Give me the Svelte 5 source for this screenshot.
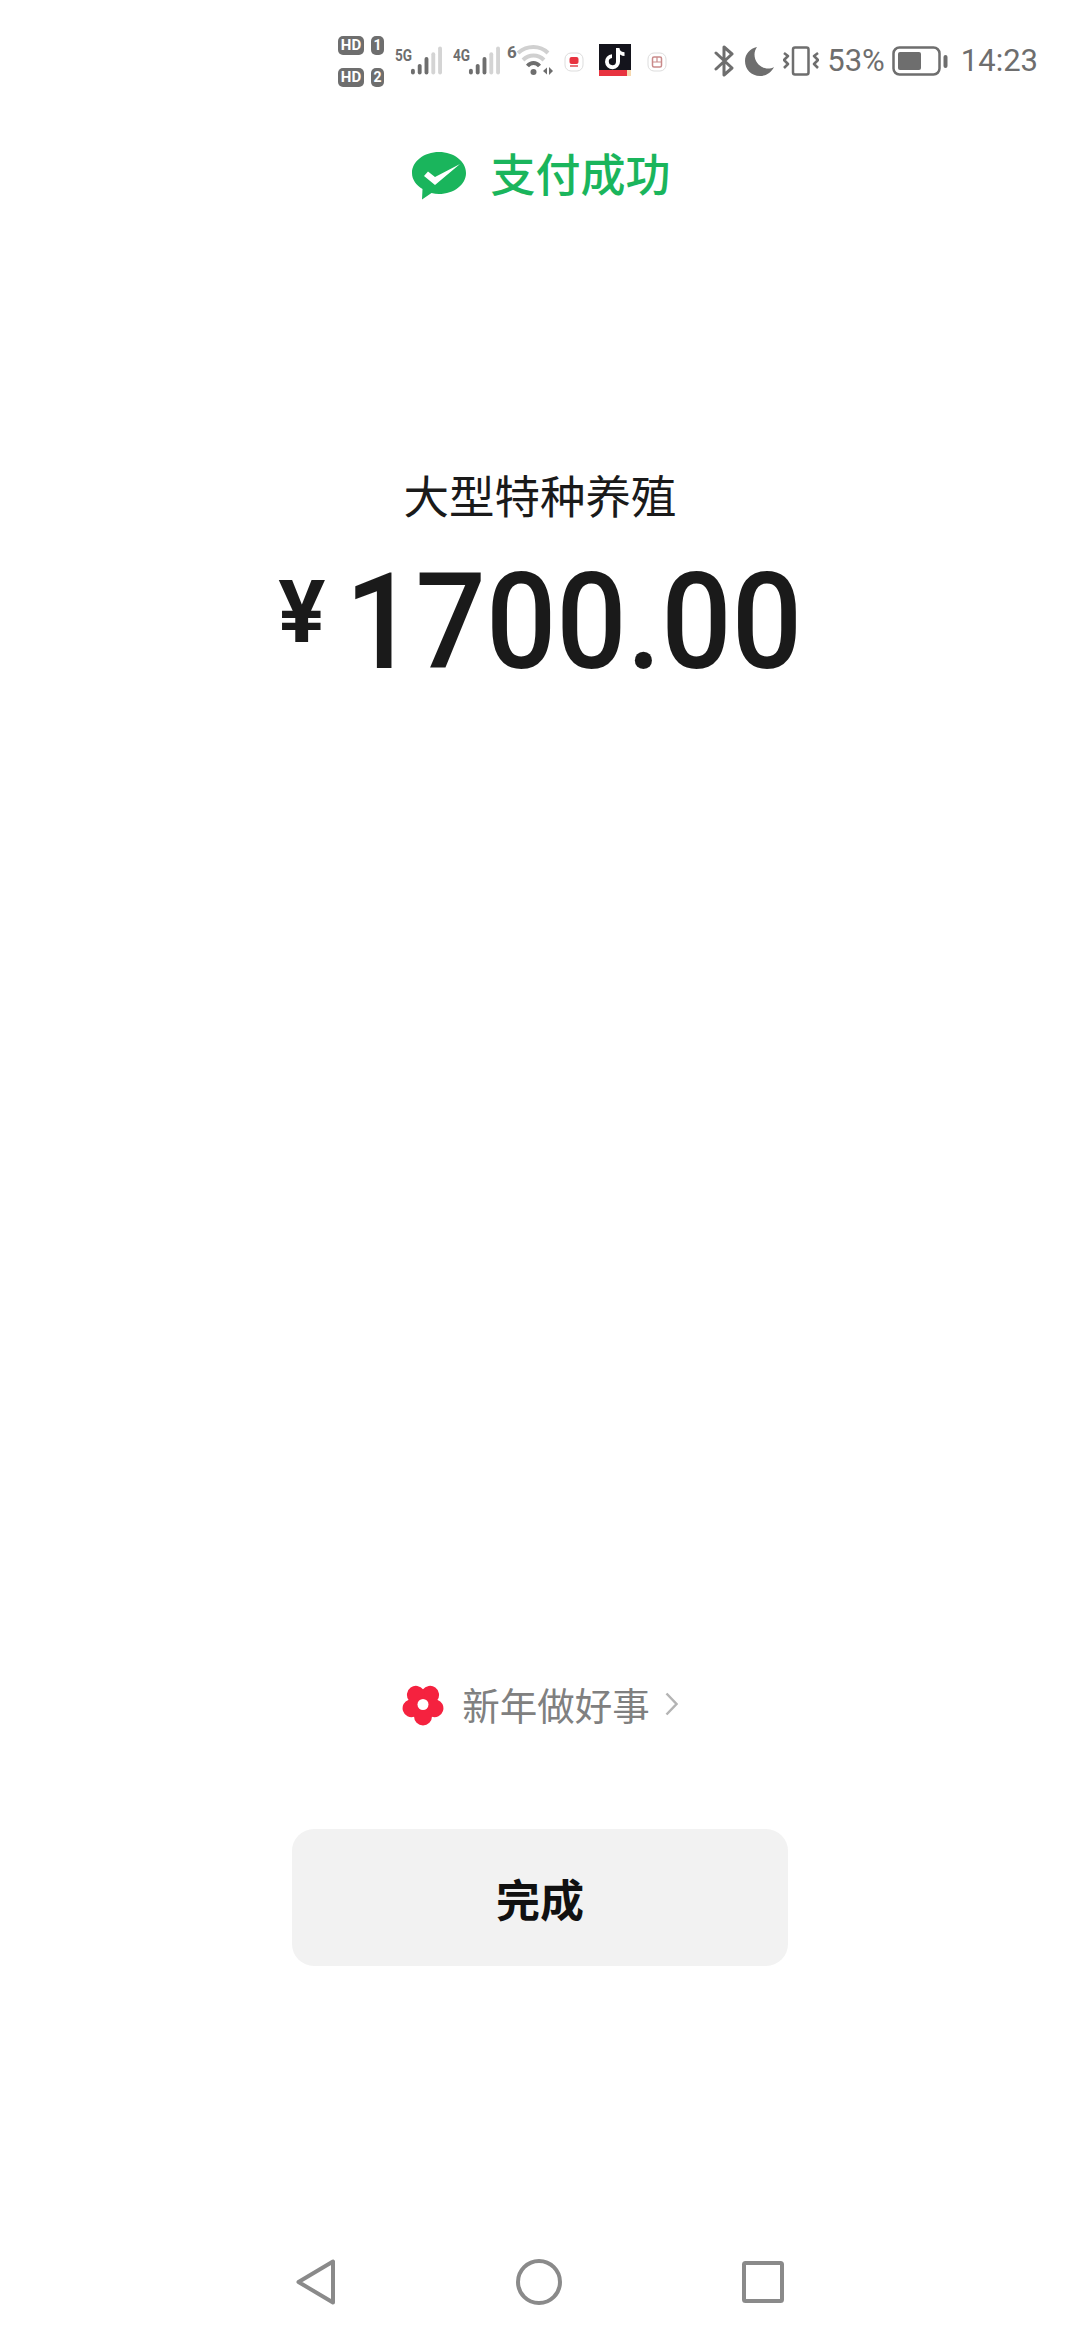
<script>
	const sims = [{ label: '5G' }, { label: '4G' }];
	const bars = [
		{ x: 0, h: 6, on: true },
		{ x: 7, h: 11, on: true },
		{ x: 14, h: 18, on: true },
		{ x: 21, h: 23, on: false },
		{ x: 28, h: 29, on: false }
	];
</script>

<div class="page">
	<header class="status">
		<div class="left">
			<div class="hd">
				<div class="hd-row"><span class="hd-tag">HD</span><span class="hd-num">1</span></div>
				<div class="hd-row"><span class="hd-tag">HD</span><span class="hd-num">2</span></div>
			</div>
			{#each sims as sim}
				<div class="sim">
					<span class="sim-label">{sim.label}</span>
					<svg width="33" height="30" viewBox="0 0 33 30">
						{#each bars as b}
							<rect x={b.x + 1} y={30 - b.h} width="4" height={b.h} rx="2" fill={b.on ? '#6e6e6e' : '#d4d4d4'} />
						{/each}
					</svg>
				</div>
			{/each}
			<div class="wifi">
				<span class="wifi-num">6</span>
				<svg width="36" height="32" viewBox="0 0 36 32" fill="none">
					<path d="M1 9 C10 1 23 1 31 9" stroke="#d0d0d0" stroke-width="4" />
					<path d="M6 16 C12 10 21 10 27 16" stroke="#d0d0d0" stroke-width="4" />
					<path d="M10.500 22 C14 18 19 18 22.500 22" stroke="#6e6e6e" stroke-width="4" />
					<circle cx="16.500" cy="28" r="3" fill="#6e6e6e" />
					<path d="M26 27 L30 23.500 V30.500Z M32 23 L36 27 L32 31Z" fill="#6e6e6e" />
				</svg>
			</div>
			<svg class="app-a" width="20" height="20" viewBox="0 0 20 20">
				<rect x="1" y="1" width="18" height="18" rx="6" fill="#fff" stroke="#ddd" />
				<rect x="5.500" y="5" width="9" height="7" rx="2" fill="#e8333f" />
				<rect x="6" y="13" width="8" height="2" fill="#e8767d" />
			</svg>
			<svg class="app-tt" width="32" height="32" viewBox="0 0 32 32">
				<rect width="32" height="32" fill="#14141c" />
				<path d="M17 4 V17.500 A3.600 3.600 0 1 1 13 14 V10.200 A7.500 7.500 0 1 0 21 17.500 V10.500 C22.500 11.500 24 12 25.500 12 V8.200 C21.500 8 20.800 6 20.500 4Z" fill="#fff" />
				<rect y="26" width="28" height="6" fill="#e8333f" />
				<rect x="28" y="26" width="4" height="6" fill="#f6d9b0" />
			</svg>
			<svg class="app-b" width="20" height="20" viewBox="0 0 20 20" fill="none">
				<rect x="1" y="1" width="18" height="18" rx="6" fill="#fff" stroke="#ddd" />
				<rect x="5.500" y="5" width="9" height="10" rx="1.500" stroke="#c98a8a" stroke-width="1.500" />
				<path d="M5.500 10 H14.500 M10 5 V10" stroke="#c98a8a" stroke-width="1.200" />
			</svg>
		</div>
		<div class="right">
			<svg width="21" height="32" viewBox="0 0 21 32" fill="none" stroke="#6e6e6e" stroke-width="3" stroke-linejoin="round" stroke-linecap="round">
				<path d="M2 8 L18 23 L10 30 V2 L18 9 L2 24" />
			</svg>
			<svg class="moon" width="29" height="30" viewBox="0 0 29 30">
				<path d="M12 1 C5 2.500 0 8 0 15 C0 23.500 6.500 30 15 30 C21 30 26.500 26.500 29 21 C27.500 22 25 22.500 23 22.500 C15.500 22.500 9.500 16 9.500 8.500 C9.500 6 10.500 3 12 1Z" fill="#6e6e6e" />
			</svg>
			<svg class="vibrate" width="36" height="30" viewBox="0 0 36 30" fill="none" stroke="#6e6e6e" stroke-width="2.500" stroke-linejoin="round">
				<rect x="10" y="1.500" width="15.500" height="27" rx="2" />
				<path d="M1 7 L5 10 L1 14 L5 18 L1 22" />
				<path d="M35 7 L31 10 L35 14 L31 18 L35 22" />
			</svg>
			<span class="pct">53%</span>
			<svg class="battery" width="56" height="30" viewBox="0 0 56 30" fill="none">
				<rect x="1.500" y="1.500" width="46" height="27" rx="6" stroke="#6e6e6e" stroke-width="2.500" />
				<rect x="6" y="6" width="23" height="18" rx="2" fill="#6e6e6e" />
				<rect x="51.500" y="9" width="4" height="13" rx="2" fill="#6e6e6e" />
			</svg>
			<span class="time">14:23</span>
		</div>
	</header>

	<main class="main">
		<div class="result">
			<svg width="54" height="48" viewBox="0 0 54 48">
				<path d="M27 0 C42 0 54 9.500 54 21 C54 32.500 42 42 27 42 C24.500 42 22 41.700 19.500 41 L10 47.500 L10.500 37 C4 33 0 27.500 0 21 C0 9.500 12 0 27 0Z" fill="#1ab55c" />
				<path d="M12 24 L16 19.500 L23 25 L48 12 L23 33Z" fill="#fff" />
			</svg>
			<span class="result-text">支付成功</span>
		</div>

		<div class="payee">大型特种养殖</div>
		<div class="amount">
			<span class="currency">¥</span>
			<span class="value">1700.00</span>
		</div>

		<div class="spacer"></div>

		<div class="promo">
			<svg width="42" height="43" viewBox="0 0 42 43">
				<g fill="#f5223f">
					<circle cx="21" cy="21.500" r="11" />
					{#each [0, 72, 144, 216, 288] as a}
						<circle cx="21" cy="9.500" r="9" transform="rotate({a + 36} 21 21.500)" />
					{/each}
				</g>
				<circle cx="21" cy="21.500" r="5.500" fill="#fff" />
			</svg>
			<span class="promo-text">新年做好事</span>
			<svg class="chevron" width="13" height="24" viewBox="0 0 13 24" fill="none">
				<path d="M1.500 1.500 L11.500 12 L1.500 22.500" stroke="#b4b4b4" stroke-width="2.500" />
			</svg>
		</div>

		<button class="done">完成</button>
	</main>

	<nav class="nav">
		<svg width="40" height="46" viewBox="0 0 40 46" fill="none" stroke="#8a8a8a" stroke-width="4" stroke-linejoin="round">
			<path d="M37 2.500 V43.500 L2.500 23Z" />
		</svg>
		<svg width="46" height="46" viewBox="0 0 46 46" fill="none" stroke="#8a8a8a" stroke-width="4">
			<circle cx="23" cy="23" r="21" />
		</svg>
		<svg width="42" height="42" viewBox="0 0 42 42" fill="none" stroke="#8a8a8a" stroke-width="4" stroke-linejoin="round">
			<rect x="2" y="2" width="38" height="38" rx="1.500" />
		</svg>
	</nav>
</div>

<style>
	:global(body) {
		margin: 0;
		background: #fff;
	}
	.page {
		width: 1080px;
		height: 2338px;
		display: flex;
		flex-direction: column;
		font-family: 'Noto Sans CJK SC', 'Roboto', sans-serif;
		overflow: hidden;
	}
	.status {
		height: 100px;
		box-sizing: border-box;
		padding: 36px 42px 0 338px;
		display: flex;
		justify-content: space-between;
		align-items: flex-start;
		color: #6e6e6e;
		font-family: 'Roboto', sans-serif;
	}
	.left {
		display: flex;
		align-items: flex-start;
	}
	.hd {
		display: flex;
		flex-direction: column;
		gap: 13px;
		width: 46px;
	}
	.hd-row {
		display: flex;
		justify-content: space-between;
	}
	.hd-tag, .hd-num {
		height: 19px;
		background: #6e6e6e;
		color: #fff;
		border-radius: 5px;
		font-size: 15px;
		line-height: 19px;
		font-weight: 700;
		text-align: center;
	}
	.hd-tag { width: 26px; }
	.hd-num { width: 13px; font-size: 14px; }
	.sim {
		display: flex;
		align-items: flex-start;
		margin-left: 11px;
		margin-top: 9px;
		width: 47px;
	}
	.sim-label {
		width: 15px;
		font-size: 17px;
		line-height: 16px;
		font-weight: 700;
		transform: scaleX(0.8);
		transform-origin: left;
		margin-top: 2px;
		white-space: nowrap;
	}
	.wifi {
		display: flex;
		align-items: flex-start;
		margin-left: 7px;
		margin-top: 8px;
		gap: 2px;
	}
	.wifi-num {
		font-size: 17px;
		line-height: 16px;
		font-weight: 700;
		width: 8px;
	}
	.app-a { margin: 16px 0 0 11px; }
	.app-tt { margin: 8px 0 0 15px; }
	.app-b { margin: 16px 0 0 16px; }
	.right {
		display: flex;
		align-items: center;
		height: 44px;
		margin-top: 3px;
	}
	.moon { margin-left: 10px; }
	.vibrate { margin-left: 9px; }
	.pct, .time {
		font-size: 31px;
		line-height: 44px;
		color: #6e6e6e;
	}
	.pct { margin-left: 8px; }
	.battery { margin-left: 7px; }
	.time { margin-left: 13px; }
	.main {
		flex: 1;
		display: flex;
		flex-direction: column;
		align-items: center;
	}
	.result {
		display: flex;
		align-items: center;
		gap: 24px;
		margin-top: 46px;
		height: 60px;
		margin-left: 3px;
	}
	.result-text {
		font-size: 45px;
		line-height: 60px;
		font-weight: 500;
		color: #1ab55c;
		position: relative;
		top: -3px;
	}
	.payee {
		margin-top: 258px;
		font-size: 45.500px;
		line-height: 60px;
		color: #1a1a1a;
	}
	.amount {
		display: flex;
		align-items: baseline;
		gap: 20px;
		margin-top: 34px;
		color: #1a1a1a;
		font-family: 'Roboto', sans-serif;
	}
	.currency {
		font-size: 88px;
		font-weight: 700;
		line-height: 130px;
		position: relative;
		top: -26px;
	}
	.value {
		font-size: 134px;
		line-height: 130px;
		font-weight: 500;
		transform: scaleX(0.925);
		transform-origin: left;
		margin-right: -38px;
	}
	.spacer { flex: 1; }
	.promo {
		display: flex;
		align-items: center;
		gap: 18px;
		height: 50px;
	}
	.promo-text {
		font-size: 37.500px;
		line-height: 50px;
		color: #808080;
	}
	.chevron { margin-left: -3px; }
	.done {
		margin-top: 100px;
		margin-bottom: 272px;
		width: 496px;
		height: 137px;
		border: none;
		border-radius: 22px;
		background: #f2f2f2;
		color: #111;
		font-family: inherit;
		font-size: 44px;
		font-weight: 700;
	}
	.nav {
		height: 100px;
		box-sizing: border-box;
		display: flex;
		align-items: center;
		justify-content: center;
		gap: 180px;
		padding-bottom: 12px;
	}
</style>
